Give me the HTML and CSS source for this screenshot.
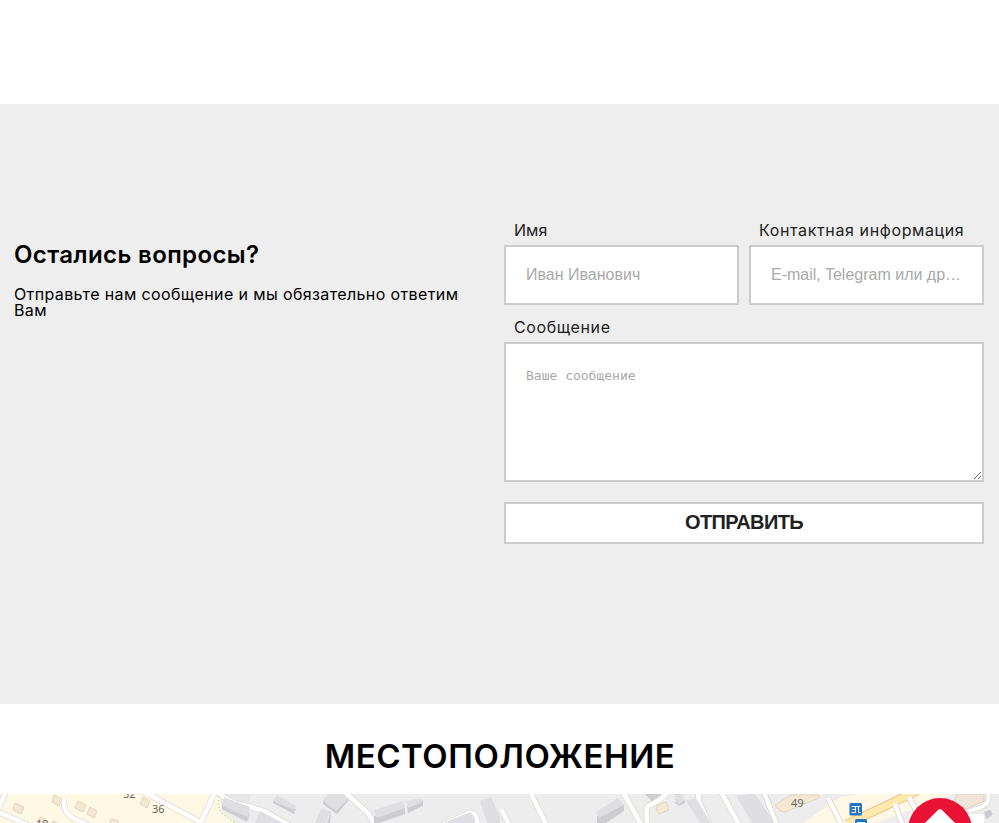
FILE: index.html
```html
<!DOCTYPE html>
<html lang="ru">
<head>
<meta charset="utf-8">
<title>Контакты</title>
<link rel="stylesheet" href="styles.css">
</head>
<body>
<section class="questions">
  <div class="intro">
    <h2 class="intro-title">Остались вопросы?</h2>
    <p class="intro-text">Отправьте нам сообщение и мы обязательно ответим Вам</p>
  </div>
  <form class="form">
    <div class="row">
      <label class="field"><span class="label label-name">Имя</span><input class="control" type="text" placeholder="Иван Иванович"></label>
      <label class="field"><span class="label label-contact">Контактная информация</span><input class="control" type="text" placeholder="E-mail, Telegram или другой способ связи"></label>
    </div>
    <label class="field message"><span class="label label-message">Сообщение</span><textarea class="control area" placeholder="Ваше сообщение"></textarea></label>
    <button class="send" type="button">ОТПРАВИТЬ</button>
  </form>
</section>
<section class="location">
  <h2 class="location-title">МЕСТОПОЛОЖЕНИЕ</h2>
  <svg class="map" viewBox="0 794 999 29" width="999" height="29">
    <rect y="794" width="999" height="29" fill="#ededed"/>
    <path d="M0 794H219L207 823H0Z" fill="#fff8e4"/>
    <path d="M207 823L219 794 222 812 236 823Z" fill="#fff8e4"/>
    <path d="M219 794H250V807Q228 801 219 794Z" fill="#e6e6e8"/>
    <!-- residential streets -->
    <g fill="none" stroke="#dfd8d0" stroke-width="6">
      <path d="M-2 812L28 825M7 790L-2 809M64 798Q62 812 73 818L90 826M133 786L200 822M217 788L199 826M218 793Q231 804 251 807L266 812 292 827M340 788L368 813 377 828M438 827L469 813Q477 811 478 827M501 809L511 828M529 790L548 828M622 790L643 828M670 789Q664 799 648 806 645 812 648 826M701 791Q696 796 700 804L711 828M720 790L741 828"/>
    </g>
    <g fill="none" stroke="#fff" stroke-width="4.6">
      <path d="M-2 812L28 825M7 790L-2 809M64 798Q62 812 73 818L90 826M133 786L200 822M217 788L199 826M218 793Q231 804 251 807L266 812 292 827M340 788L368 813 377 828M438 827L469 813Q477 811 478 827M501 809L511 828M529 790L548 828M622 790L643 828M670 789Q664 799 648 806 645 812 648 826M701 791Q696 796 700 804L711 828M720 790L741 828"/>
    </g>
    <path d="M219 796Q217 809 223 814T236 823" fill="none" stroke="#c9dda3" stroke-width="1.5" stroke-dasharray="1.5 2"/>
    <!-- houses -->
    <g fill="#f5e8d2" stroke="#e3d5bf" stroke-width="1">
      <path d="M15 803l9 4-3 7-8-4zM54 795l8 4-3 7-7-4zM78 801l8 4-3 7-8-4zM90 807l7 4-3 7-7-4zM143 797l7 4-3 7-7-4zM111 819l7 2v4h-9zM40 817l6 3v4h-8zM53 821l5 2h-6z"/>
      <path d="M657 805L666 802 669 810 659 814 656 810Z"/>
      <path d="M775 805L791 795H819V798L785 812Q779 812 775 805Z"/>
    </g>
    <!-- block sides -->
    <g fill="#cdcdd1">
      <path d="M222 803L250 814 247 822 222 809ZM274 799L296 809 294 814 273 803ZM323 800L336 810 348 798V801L337 814 323 804ZM374 816L405 807V814L379 823H374ZM407 806L423 800V806L408 813ZM331 813L327 823H330L331 814ZM597 816L624 804V811L606 823H597ZM645 794H662L652 801ZM674 802L685 800V803L679 806ZM984 812l5-2 3 5-6 4z"/>
    </g>
    <!-- block roofs -->
    <g fill="#dedee3">
      <path d="M224 797L250 807 248 817 222 806ZM277 795L296 806 294 810 273 801ZM328 794H344L348 799 336 811 323 801ZM374 810L403 801 405 808 377 818ZM407 801L421 798 423 802 408 808ZM260 811L283 823H255ZM321 809L331 811 326 823H315ZM450 820L471 812 475 819 474 823H444ZM480 801L491 797 500 817V823H487ZM596 812L618 798 624 805 599 818ZM675 794H683L684 798 675 797ZM674 799L680 796 685 800 679 804ZM686 801L696 798 711 823H700ZM736 796L750 794V819ZM750 794H755L775 823H750Z"/>
    </g>
    <!-- avenue -->
    <path d="M845 794H953L918 807 875 823H803Z" fill="#fff8e4"/>
    <path d="M838 798L858 794H840L830 800Z" fill="#ededed"/>
    <path d="M917 791L847 824" fill="none" stroke="#e9bd87" stroke-width="9"/>
    <path d="M917 791L847 824" fill="none" stroke="#ffeaad" stroke-width="7"/>
    <path d="M763 790L777 825M828 798L842 825M895 804L903 826M909 797L917 812" fill="none" stroke="#ddd3ca" stroke-width="6"/>
    <path d="M763 790L777 825M828 798L842 825M895 804L903 826M909 797L917 812" fill="none" stroke="#fff" stroke-width="4.4"/>
    <path d="M957 794H984V801L966 809 954 803Z" fill="#efe5d8" stroke="#dfd2c2"/>
    <path d="M988 793Q991 802 982 807L967 812" fill="none" stroke="#ddd3ca" stroke-width="5"/>
    <path d="M988 793Q991 802 982 807L967 812" fill="none" stroke="#fff" stroke-width="3.6"/>
    <rect x="963" y="814" width="21" height="15" rx="2" fill="#fff"/>
    <path d="M985 813l5-3 3 4-6 5z" fill="#cbcbd0"/>
    <g class="numbers"><text x="123" y="798">32</text><text x="152" y="813">36</text><text x="36" y="828">19</text><text x="791" y="807">49</text></g>
    <!-- transport stops -->
    <rect x="849.5" y="803" width="12.5" height="12.5" rx="1.5" fill="#2374c6"/>
    <path d="M851.5 806.5h8.500M855.500 806.500v6h-4M852 809.500h3.500M858.500 806.500v6h2" fill="none" stroke="#fff"/>
    <rect x="855" y="819" width="12" height="12" rx="1.5" fill="#2374c6"/>
    <path d="M857 822.500h8" stroke="#fff"/>
    <circle cx="940" cy="830" r="32" fill="#e91235"/>
    <path d="M923 825L938 810Q940 808 942 810L957 825Z" fill="#fff"/>
  </svg>
</section>
</body>
</html>
```

FILE: styles.css
```css
* { box-sizing: border-box; }

body {
  margin: 0;
  padding-top: 104px;
  height: 823px;
  overflow: hidden;
  background: #fff;
  color: #000;
  font: 16px/16px Inter, "Liberation Sans", sans-serif;
}

.questions {
  display: flex;
  height: 600px;
  padding: 118px 15px 0 14px;
  background: #eee;
}

.intro { width: 490px; padding-top: 20px; }

.intro-title {
  margin: 0 0 19px;
  font-size: 24px;
  line-height: 25px;
  font-weight: 600;
  letter-spacing: 0.37px;
  white-space: nowrap;
}

.intro-text { margin: 0; width: 460px; letter-spacing: 0.38px; }

.form { width: 480px; color: #212121; }

.row { display: flex; gap: 10px; }

.field { display: block; flex: 1; }

.message { margin-top: 14px; }

.label { display: block; height: 23px; padding-left: 10px; white-space: nowrap; }

.label-contact { letter-spacing: 0.62px; }

.label-message { letter-spacing: 0.6px; }

.control {
  display: block;
  width: 100%;
  height: 60px;
  margin: 0;
  padding: 0 20px;
  border: 2px solid #ccc;
  border-radius: 0;
  background: #fff;
  font: 16px "Liberation Sans", sans-serif;
  text-overflow: ellipsis;
}

.control::placeholder { color: #a9a9a9; opacity: 1; }

.area {
  height: 140px;
  padding: 24px 20px;
  font: 13px "DejaVu Sans Mono", monospace;
  resize: both;
}

.send {
  display: block;
  width: 100%;
  height: 42px;
  margin-top: 20px;
  padding: 0 0 2px;
  border: 2px solid #ccc;
  background: #fff;
  color: #212121;
  font: bold 20px "Liberation Sans", sans-serif;
  letter-spacing: -0.62px;
}

.location-title {
  height: 90px;
  margin: 0;
  padding: 34px 0 0 1px;
  font-size: 33px;
  line-height: 36px;
  font-weight: 600;
  letter-spacing: 0.55px;
  text-align: center;
}

.map { display: block; }

.numbers { font: 11px "Noto Sans", sans-serif; fill: #666; }
```
